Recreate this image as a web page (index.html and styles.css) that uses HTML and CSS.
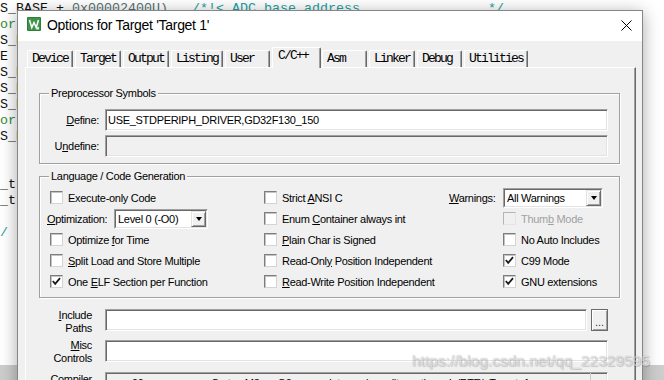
FILE: index.html
```html
<!DOCTYPE html>
<html lang="en">
<head>
    <meta charset="UTF-8">
    <title>Options for Target 'Target 1'</title>
    <link rel="stylesheet" href="styles.css">
</head>
<body>
    <div class="editor-pane">
<pre class="editor"><span>S_BASE + </span><span class="num">0x00002400U)</span>   <span class="cmt">/*!&lt; ADC base address                */</span>
<span class="grn">or ADC registers</span>
S_BASE
E
S_BASE
S_BASE
S_BASE
<span class="grn">or DMA registers</span>
S_BASE


_t
_t

<span class="cmt">/</span>
</pre>
        <div class="hscroll"></div>
    </div>

    <div class="dialog">
        <div class="titlebar">
            <svg class="app-icon" width="14" height="14" viewBox="0 0 14 14">
                <rect x="0" y="0" width="14" height="14" rx="1" fill="#2f7d3b"/>
                <rect x="1" y="1" width="12" height="12" fill="#3e9449"/>
                <polyline points="2.5,3 4.8,10.5 7,5.5 9.2,10.5 11.5,3" fill="none" stroke="#fff" stroke-width="1.5"/>
                <rect x="9.5" y="10" width="2.5" height="2.5" fill="#d8eed8"/>
            </svg>
            <span class="title">Options for Target 'Target 1'</span>
            <svg class="close" width="11" height="11" viewBox="0 0 11 11">
                <path d="M0.5 0.5 L10.5 10.5 M10.5 0.5 L0.5 10.5" stroke="#000" stroke-width="1"/>
            </svg>
        </div>

        <div class="dialog-body">
            <ul class="tabs">
                <li class="tab">Device</li>
                <li class="tab">Target</li>
                <li class="tab">Output</li>
                <li class="tab">Listing</li>
                <li class="tab">User</li>
                <li class="tab active">C/C++</li>
                <li class="tab">Asm</li>
                <li class="tab">Linker</li>
                <li class="tab">Debug</li>
                <li class="tab">Utilities</li>
            </ul>

            <div class="panel">
                <fieldset class="group">
                    <legend>Preprocessor Symbols</legend>
                    <div class="sym-grid">
                        <label class="rlabel"><u>D</u>efine:</label>
                        <div class="field">USE_STDPERIPH_DRIVER,GD32F130_150</div>
                        <label class="rlabel">U<u>n</u>define:</label>
                        <div class="field disabled"></div>
                    </div>
                </fieldset>

                <fieldset class="group lang">
                    <legend>Language / Code Generation</legend>
                    <div class="lang-grid">
                        <div class="check first"><span class="box"></span><span>Execute-only Code</span></div>
                        <div class="check"><span class="box"></span><span>Strict <u>A</u>NSI C</span></div>
                        <div class="combo-row">
                            <span class="warn-label"><u>W</u>arnings:</span>
                            <div class="combo warn">
                                <div class="combo-inner">
                                    <span class="combo-text">All Warnings</span>
                                    <span class="combo-btn"><span class="arrow"></span></span>
                                </div>
                            </div>
                        </div>

                        <div class="combo-row">
                            <span class="opt-label"><u>O</u>ptimization:</span>
                            <div class="combo opt">
                                <div class="combo-inner">
                                    <span class="combo-text">Level 0 (-O0)</span>
                                    <span class="combo-btn"><span class="arrow"></span></span>
                                </div>
                            </div>
                        </div>
                        <div class="check"><span class="box"></span><span>Enum <u>C</u>ontainer always int</span></div>
                        <div class="check right off"><span class="box"></span><span>Thum<u>b</u> Mode</span></div>

                        <div class="check first"><span class="box"></span><span>Optimize <u>f</u>or Time</span></div>
                        <div class="check"><span class="box"></span><span><u>P</u>lain Char is Signed</span></div>
                        <div class="check right"><span class="box"></span><span>No Auto Includes</span></div>

                        <div class="check first"><span class="box"></span><span><u>S</u>plit Load and Store Multiple</span></div>
                        <div class="check"><span class="box"></span><span>Read-Onl<u>y</u> Position Independent</span></div>
                        <div class="check right"><span class="box on"><svg width="11" height="11" viewBox="0 0 11 11"><polyline points="1.8,5 4.2,7.8 9,2.2" fill="none" stroke="#1a1a1a" stroke-width="1.8"/></svg></span><span>C99 Mode</span></div>

                        <div class="check first"><span class="box on"><svg width="11" height="11" viewBox="0 0 11 11"><polyline points="1.8,5 4.2,7.8 9,2.2" fill="none" stroke="#1a1a1a" stroke-width="1.8"/></svg></span><span>One <u>E</u>LF Section per Function</span></div>
                        <div class="check"><span class="box"></span><span><u>R</u>ead-Write Position Independent</span></div>
                        <div class="check right"><span class="box on"><svg width="11" height="11" viewBox="0 0 11 11"><polyline points="1.8,5 4.2,7.8 9,2.2" fill="none" stroke="#1a1a1a" stroke-width="1.8"/></svg></span><span>GNU extensions</span></div>
                    </div>
                </fieldset>

                <div class="paths">
                    <label class="plabel"><u>I</u>nclude<br>Paths</label>
                    <div class="path-row">
                        <div class="field"></div>
                        <button class="browse">...</button>
                    </div>

                    <label class="plabel"><u>M</u>isc<br>Controls</label>
                    <div class="field misc"></div>

                    <label class="plabel compiler-label">Compiler<br>control<br>string</label>
                    <div class="field disabled compiler">
                        <span class="cmd">--c99 --gnu -c --cpu Cortex-M3 -g -O0 --apcs=interwork --split_sections -I ./RTE/_Target_1</span>
                        <span class="vscroll"></span>
                    </div>
                </div>
            </div>
        </div>
    </div>

    <div class="watermark">https://blog.csdn.net/qq_22329595</div>
</body>
</html>
```

FILE: styles.css
```css
* {
    margin: 0;
    padding: 0;
    box-sizing: border-box;
}

body {
    width: 664px;
    height: 380px;
    overflow: hidden;
    position: relative;
    background: #fff;
    color: #000;
    font-family: "Liberation Sans", Arial, sans-serif;
    font-size: 11px;
    letter-spacing: -0.3px;
}

/* Editor behind the dialog */
.editor-pane {
    height: 380px;
    display: flex;
    flex-direction: column;
}

.editor {
    flex: 1;
    padding-top: 1px;
    font-family: "Liberation Mono", monospace;
    font-size: 13.33px;
    line-height: 16px;
    letter-spacing: 0;
    color: #111;
}

.editor .num {
    color: #55706f;
}

.editor .cmt {
    color: #23a0a0;
}

.editor .grn {
    color: #2f8a3c;
}

.hscroll {
    height: 15px;
    background: #cdcdcd;
}

/* Dialog window */
.dialog {
    position: absolute;
    left: 17px;
    top: 10px;
    width: 626px;
    height: 400px;
    background: #f0f0f0;
    border: 1px solid #868686;
    box-shadow: 0 3px 16px rgba(0, 0, 0, 0.35);
}

.titlebar {
    height: 30px;
    background: #fff;
    display: flex;
    align-items: flex-start;
    padding: 6px 10px 0 9px;
}

.app-icon {
    flex: none;
    margin-right: 6px;
}

.title {
    flex: 1;
    font-size: 14px;
    line-height: 16px;
    letter-spacing: -0.3px;
    color: #000;
}

.close {
    flex: none;
    margin-top: 3px;
}

.dialog-body {
    padding: 0 6px 0 7px;
}

/* Tabs */
.tabs {
    list-style: none;
    display: flex;
    align-items: flex-end;
    height: 26px;
    padding-left: 2px;
}

.tab {
    height: 17px;
    min-width: 45px;
    margin-right: 2px;
    padding: 0 4px;
    background: #f0f0f0;
    border: 1px solid;
    border-bottom: none;
    border-color: #fff #696969 #696969 #fff;
    border-radius: 2px 2px 0 0;
    box-shadow: inset -1px 0 0 #a0a0a0;
    font-family: "Liberation Mono", monospace;
    font-size: 13px;
    line-height: 16px;
    letter-spacing: -1.8px;
    white-space: nowrap;
    color: #000;
}

.tab.active {
    height: 21px;
    min-width: 49px;
    margin-right: 1px;
    margin-bottom: -1px;
    padding: 0 5px;
    position: relative;
    z-index: 1;
}

.panel {
    height: 330px;
    border: 1px solid;
    border-color: #fff #696969 #696969 #fff;
    box-shadow: inset -1px 0 0 #a0a0a0;
}

/* Group boxes */
.group {
    margin: 19px 15px 0 13px;
    border: 1px solid #a0a0a0;
    box-shadow: 1px 1px 0 #fff, inset 1px 1px 0 #fff;
}

.group.lang {
    margin-top: 6px;
}

.group legend {
    margin-left: 9px;
    padding: 0 2px;
    line-height: 13px;
    background: #f0f0f0;
}

.sym-grid {
    display: grid;
    grid-template-columns: 59px 1fr;
    column-gap: 6px;
    row-gap: 4px;
    align-items: center;
    padding: 9px 11px 6px 0;
}

.rlabel {
    text-align: right;
}

.field {
    height: 22px;
    padding: 0 2px;
    background: #fff;
    border: 1px solid;
    border-color: #a0a0a0 #fff #fff #a0a0a0;
    box-shadow: inset 1px 1px 0 #696969, inset -1px -1px 0 #e3e3e3;
    line-height: 21px;
    white-space: nowrap;
    overflow: hidden;
}

.field.disabled {
    background: #f0f0f0;
}

/* Language / Code Generation */
.lang-grid {
    display: grid;
    grid-template-columns: 217px 185px 1fr;
    grid-auto-rows: 21px;
    align-items: center;
    padding: 4px 15px 5px 7px;
}

.check {
    display: flex;
    align-items: center;
    gap: 5px;
    white-space: nowrap;
}

.check.first {
    padding-left: 3px;
}

.check.right {
    padding-left: 54px;
}

.box {
    flex: none;
    width: 13px;
    height: 13px;
    background: #fff;
    border: 1px solid;
    border-color: #7d7d7d #d4d4d4 #d4d4d4 #7d7d7d;
    box-shadow: inset 1px 1px 0 #c4c4c4;
}

.box svg {
    display: block;
}

.check.off {
    color: #a0a0a0;
}

.check.off .box {
    background: #f0f0f0;
    border-color: #b4b4b4 #e4e4e4 #e4e4e4 #b4b4b4;
    box-shadow: none;
}

.combo-row {
    display: flex;
    align-items: center;
    white-space: nowrap;
}

.opt-label {
    width: 67px;
}

.warn-label {
    width: 54px;
}

.combo {
    height: 20px;
    border: 1px solid;
    border-color: #a0a0a0 #fff #fff #a0a0a0;
    background: #fff;
}

.combo.opt {
    width: 94px;
}

.combo.warn {
    width: 100px;
}

.combo-inner {
    height: 100%;
    display: flex;
    align-items: center;
    border: 1px solid;
    border-color: #696969 #e3e3e3 #e3e3e3 #696969;
}

.combo-text {
    flex: 1;
    padding-left: 2px;
    line-height: 16px;
}

.combo-btn {
    width: 15px;
    height: 16px;
    display: flex;
    align-items: center;
    justify-content: center;
    background: #f0f0f0;
    border: 1px solid;
    border-color: #e3e3e3 #696969 #696969 #e3e3e3;
    box-shadow: inset 1px 1px 0 #fff, inset -1px -1px 0 #a0a0a0;
}

.arrow {
    width: 0;
    height: 0;
    border-left: 3.5px solid transparent;
    border-right: 3.5px solid transparent;
    border-top: 4px solid #000;
}

/* Include paths / misc */
.paths {
    display: grid;
    grid-template-columns: 53px 1fr;
    column-gap: 13px;
    row-gap: 4px;
    align-items: start;
    margin: 11px 27px 0 13px;
}

.plabel {
    text-align: right;
    line-height: 13px;
}

.path-row {
    display: flex;
    gap: 4px;
}

.path-row .field {
    flex: 1;
}

.browse {
    width: 17px;
    height: 22px;
    background: #f0f0f0;
    border: 1px solid #6a6a6a;
    box-shadow: inset 1px 1px 0 #fff, inset -1px -1px 0 #a0a0a0;
    font-family: "Liberation Sans", Arial, sans-serif;
    font-size: 11px;
    letter-spacing: 0;
    line-height: 24px;
    color: #3a1f4a;
}

.field.misc {
    margin-top: 1px;
}

.compiler-label {
    margin-top: 4px;
}

.field.compiler {
    margin-top: 3px;
    height: 40px;
    display: flex;
    padding: 0 0 0 14px;
}

.cmd {
    flex: 1;
    overflow: hidden;
    line-height: 15px;
    padding-top: 3px;
    color: #000;
}

.vscroll {
    width: 17px;
    border-left: 1px solid #c8c8c8;
}

/* Watermark overlay */
.watermark {
    position: absolute;
    left: 412px;
    top: 353px;
    font-size: 15.5px;
    line-height: 16px;
    letter-spacing: 0;
    color: rgba(255, 255, 255, 0.65);
    text-shadow: 0 0 1px rgba(0, 0, 0, 0.35), 1px 1px 1px rgba(0, 0, 0, 0.15);
    white-space: nowrap;
}
```
